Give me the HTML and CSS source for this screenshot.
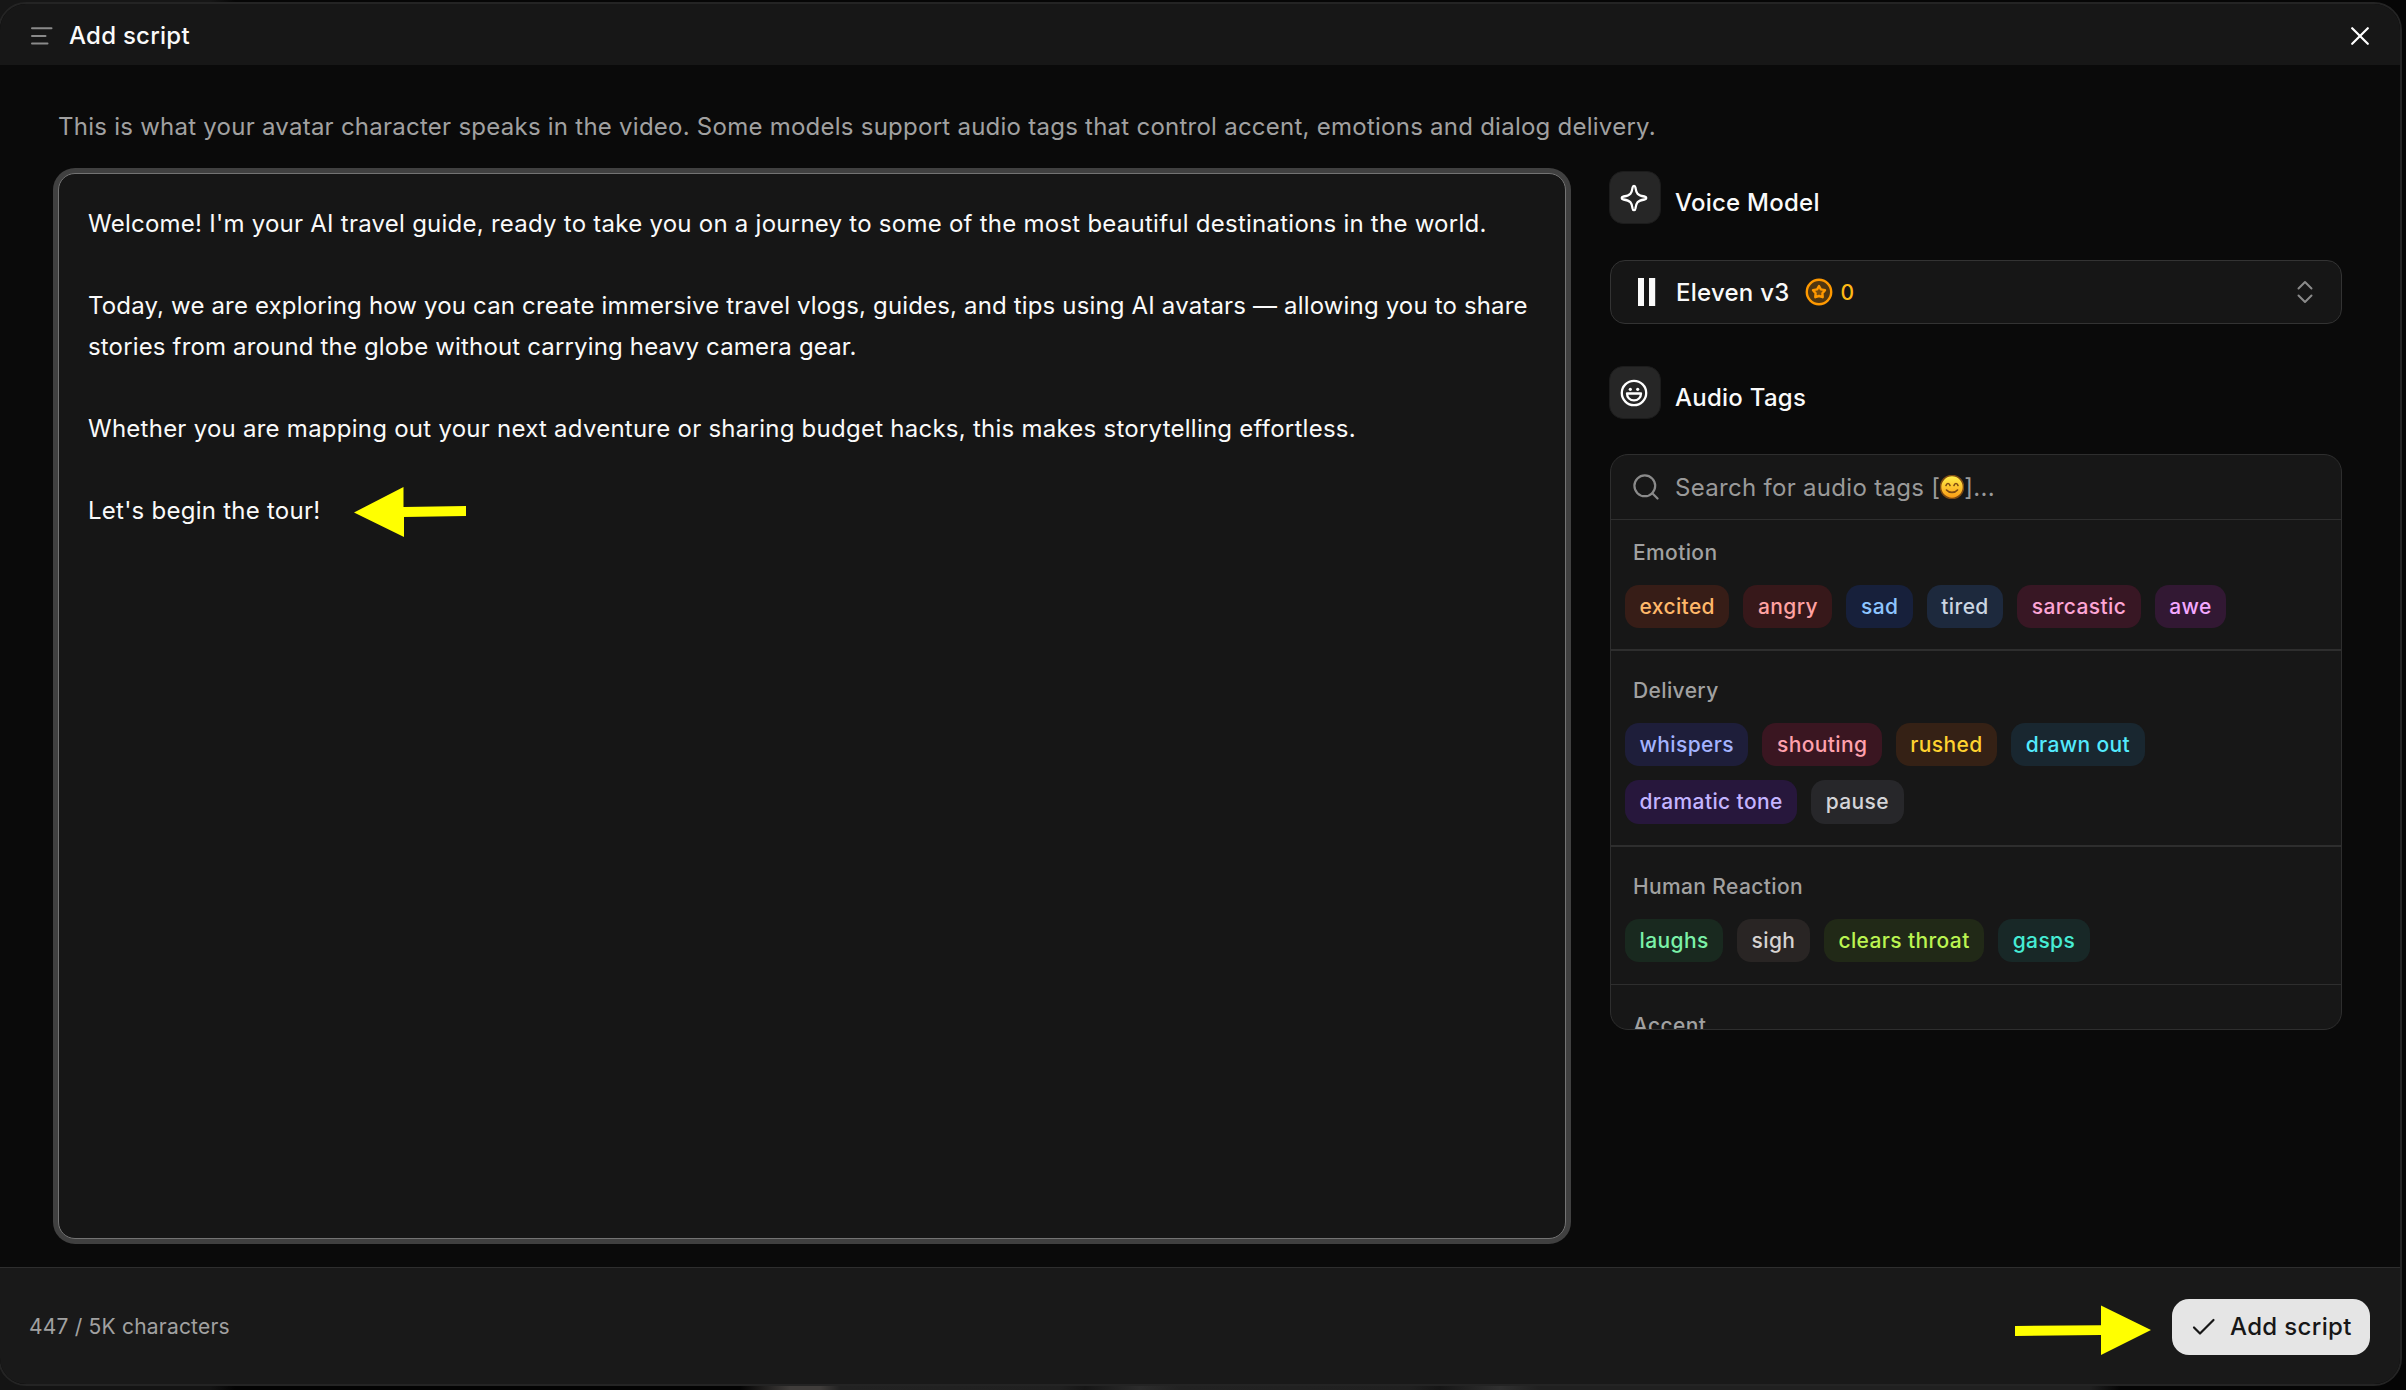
FILE: index.html
```html
<!DOCTYPE html>
<html lang="en">
<head>
<meta charset="utf-8">
<title>Add script</title>
<link rel="stylesheet" href="styles.css">
</head>

<body>

<div class="modal">
 <header class="modal-header">
  <svg class="icon-menu" width="22" height="18" viewBox="0 0 22 18"><path d="M1 1.200h19.500M1 8.900h13.500M1 16.600h15.500"/></svg>
  <h1>Add script</h1>
  <svg class="icon-close" width="18" height="18" viewBox="0 0 18 18"><path d="M1.200 1.200l15.600 15.600M16.800 1.200L1.200 16.800"/></svg>
 </header>

 <main class="modal-body">
  <p class="intro">This is what your avatar character speaks in the video. Some models support audio tags that control accent, emotions and dialog delivery.</p>
  <div class="columns">
   <div class="script">
    <p>Welcome! I'm your AI travel guide, ready to take you on a journey to some of the most beautiful destinations in the world.</p>
    <p class="tight">Today, we are exploring how you can create immersive travel vlogs, guides, and tips using AI avatars — allowing you to share<br>stories from around the globe without carrying heavy camera gear.</p>
    <p>Whether you are mapping out your next adventure or sharing budget hacks, this makes storytelling effortless.</p>
    <p>Let's begin the tour!</p>
   </div>

   <aside class="side">
    <div class="side-title">
     <span class="icon-box"><svg width="28" height="28" viewBox="0 0 28 28"><path d="M14 1.800c.9 0 1.300.9 1.500 2 .8 5.200 1.700 7.500 8.900 8.700 1.100.2 1.900.7 1.900 1.500s-.8 1.300-1.900 1.500c-7.200 1.200-8.100 3.500-8.900 8.700-.2 1.100-.6 2-1.500 2s-1.300-.9-1.500-2c-.8-5.200-1.700-7.500-8.900-8.700-1.100-.2-1.900-.7-1.900-1.500s.8-1.300 1.900-1.500c7.200-1.200 8.100-3.500 8.900-8.700.2-1.100.6-2 1.500-2z"/></svg></span>
     <h2>Voice Model</h2>
    </div>

    <div class="select">
     <svg width="18" height="28" viewBox="0 0 18 28"><path fill="#fafafa" d="M0 0h6v28H0zM11 0h6.200v28H11z"/></svg>
     <span class="select-name">Eleven v3</span>
     <svg class="coin" width="28" height="28" viewBox="0 0 28 28"><circle cx="14" cy="14" r="12.200"/><path d="M14 8l1.900 3.300 4.100.9-2.600 3 .3 4-3.700-1.200-3.700 1.200.3-4-2.600-3 4.100-.9z"/></svg>
     <span class="cost">0</span>
     <svg class="chevrons" width="16" height="24" viewBox="0 0 16 24"><path d="M1.500 8.500L8 2l6.500 6.500M1.500 15.500L8 22l6.500-6.500"/></svg>
    </div>

    <div class="side-title side-title-tags">
     <span class="icon-box"><svg width="28" height="28" viewBox="0 0 28 28"><circle cx="14" cy="14" r="12.200"/><path d="M7 14.500h14c0 4-3 6.900-7 6.900s-7-2.900-7-6.900z"/><circle class="eye" cx="10.300" cy="10.300" r="1.600"/><circle class="eye" cx="17.700" cy="10.300" r="1.600"/></svg></span>
     <h2>Audio Tags</h2>
    </div>

    <div class="tags">
     <div class="search">
      <svg class="icon-search" width="26" height="26" viewBox="0 0 26 26"><circle cx="11.800" cy="11.800" r="10.400"/><path d="M19.300 19.300l5.200 5.200"/></svg>
      <span>Search for audio tags [</span>
      <svg class="emoji" width="24" height="24" viewBox="0 0 24 24">
       <defs><linearGradient id="face" x1="0" y1="0" x2="0" y2="1"><stop offset="0" stop-color="#fff04a"/><stop offset="1" stop-color="#fb9a14"/></linearGradient></defs>
       <circle cx="12" cy="12" r="11.500" fill="url(#face)"/>
       <path d="M6 10.500c.8-2.600 3.200-2.600 4 0M14 10.500c.8-2.600 3.200-2.600 4 0M6.500 15c2.500 3.200 8.500 3.200 11 0"/>
      </svg>
      <span>]...</span>
     </div>
     <section class="group first">
      <h3>Emotion</h3>
      <div class="chips">
       <span class="chip orange">excited</span><span class="chip red">angry</span><span class="chip blue">sad</span><span class="chip slate">tired</span><span class="chip pink">sarcastic</span><span class="chip fuchsia">awe</span>
      </div>
     </section>
     <section class="group">
      <h3>Delivery</h3>
      <div class="chips">
       <span class="chip indigo">whispers</span><span class="chip rose">shouting</span><span class="chip amber">rushed</span><span class="chip cyan">drawn out</span><span class="chip violet">dramatic tone</span><span class="chip zinc">pause</span>
      </div>
     </section>
     <section class="group thin">
      <h3>Human Reaction</h3>
      <div class="chips">
       <span class="chip green">laughs</span><span class="chip stone">sigh</span><span class="chip lime">clears throat</span><span class="chip teal">gasps</span>
      </div>
     </section>
     <section class="group last">
      <h3>Accent</h3>
     </section>
    </div>
   </aside>
  </div>
 </main>

 <footer class="modal-footer">
  <span class="count">447 / 5K characters</span>
  <button class="submit"><svg width="24" height="18" viewBox="0 0 24 18"><path d="M2 9.500l6 6L21.500 2"/></svg>Add script</button>
 </footer>
</div>

<!-- pointer arrows over the dialog -->
<svg class="arrow arrow-script" width="114" height="52" viewBox="0 0 114 52"><path d="M0 26.500L49.500 1v20l62.500-1v10L50 31v20z"/></svg>
<svg class="arrow arrow-submit" width="138" height="52" viewBox="0 0 138 52"><path d="M0 22l86-.8V1.500L136 26 86 51V31L0 32z"/></svg>

</body>
</html>
```
FILE: styles.css
```css
* {
 box-sizing: border-box;
}
body {
 margin: 0;
 padding-top: 2px;
 height: 1390px;
 overflow: hidden;
 /* blurred page that shows in the strips above and below the dialog */
 background:
  linear-gradient(90deg, #141414 210px, #030303 235px, #030303 740px, #403d3b 790px, #403d3b 820px, #222 840px, #202020 1060px, #161616 1085px, #2c2c2c 1140px, #222 1180px, #202020 1410px, #161616 1440px, #303030 1500px, #202020 1540px, #202020 2090px, #050505 2120px) 0 100% / 100% 26px no-repeat,
  linear-gradient(90deg, #161616 210px, #060606 235px);
 color: #fafafa;
 font-family: Inter, "Liberation Sans", sans-serif;
 font-size: 24px;
 letter-spacing: .25px;
}
h1, h2, h3, p {
 margin: 0;
 font-weight: 500;
}
svg {
 display: block;
 flex: none;
 fill: none;
 stroke-linecap: round;
 stroke-linejoin: round;
}
.modal {
 display: flex;
 flex-direction: column;
 width: 2404px;
 height: 1384px;
 margin-left: -2px;
 border: 2px solid #242424;
 border-radius: 28px;
 overflow: hidden;
 background: #0a0a0a;
}
.modal-header {
 display: flex;
 align-items: center;
 height: 61px;
 padding: 2px 31px 0 31px;
 background: #171717;
}
.modal-header h1 {
 margin-left: 16px;
 font-size: 24px;
}
.icon-menu {
 stroke: #8a8a8a;
 stroke-width: 2;
}
.icon-close {
 margin-left: auto;
 stroke: #fff;
 stroke-width: 2.2;
}
.modal-body {
 flex: 1;
 padding: 42px 58px 0;
}
.intro {
 height: 66px;
 line-height: 40px;
 font-weight: 400;
 color: #a1a1a1;
}
.columns {
 display: flex;
 gap: 44px;
}
.script {
 width: 1508px;
 height: 1066px;
 padding: 29px;
 border: 1px solid #737373;
 border-radius: 17px;
 box-shadow: 0 0 0 5px #404040;
 background: #161616;
 line-height: 41px;
 white-space: nowrap;
}
.script p {
 margin-bottom: 41px;
 font-weight: 400;
}
.script .tight {
 letter-spacing: .16px;
}
.side {
 width: 732px;
 margin-top: -2px;
}
.side-title {
 display: flex;
 gap: 14px;
 height: 89px;
}
.side-title h2 {
 padding-top: 16px;
 font-size: 24px;
 line-height: 32px;
}
.icon-box {
 display: flex;
 align-items: center;
 justify-content: center;
 width: 52px;
 height: 53px;
 margin-left: -1px;
 padding-right: 2px;
 border: 1px solid #1c1c1c;
 border-radius: 14px;
 background: #262626;
 stroke: #fff;
 stroke-width: 2.3;
}
.eye {
 fill: #fff;
 stroke: none;
}
.select {
 display: flex;
 align-items: center;
 height: 64px;
 padding: 0 28px 0 27px;
 border: 1px solid #333;
 border-radius: 15px;
 background: #161616;
 font-weight: 500;
}
.select-name {
 margin-left: 20px;
}
.coin {
 margin: 0 8px 0 15px;
 fill: #ff9900;
 fill-opacity: .25;
 stroke: #ff9900;
 stroke-width: 2.4;
}
.cost {
 color: #ffb915;
 font-size: 21px;
}
.chevrons {
 margin-left: auto;
 stroke: #8a8a8a;
 stroke-width: 2;
}
.side-title-tags {
 height: 88px;
 margin-top: 42px;
}
.tags {
 height: 576px;
 border: 1px solid #2e2e2e;
 border-radius: 18px;
 background: #171717;
 overflow: hidden;
}
.search {
 display: flex;
 align-items: center;
 height: 65px;
 padding-left: 22px;
 border-bottom: 1px solid #2e2e2e;
 color: #9a9a9a;
 letter-spacing: .3px;
}
.icon-search {
 margin-right: 16px;
 stroke: #8a8a8a;
 stroke-width: 2.2;
}
.emoji {
 stroke: #7d4a12;
 stroke-width: 1.6;
}
.group {
 padding: 27px 14px 21.5px;
 border-bottom: 2px solid #2e2e2e;
}
.first {
 padding-top: 20px;
 padding-bottom: 21px;
}
.thin {
 padding-bottom: 22px;
 border-bottom-width: 1px;
}
.last {
 padding-top: 28px;
}
.group h3 {
 margin: 0 0 18.5px 8px;
 font-size: 21px;
 line-height: 26px;
 letter-spacing: .38px;
 color: #a1a1a1;
}
.chips {
 display: flex;
 flex-wrap: wrap;
 gap: 14px;
 width: 620px;
}
.chip {
 height: 43.5px;
 padding: 0 14.5px;
 border-radius: 14px;
 font-size: 21px;
 font-weight: 500;
 line-height: 43.5px;
 letter-spacing: .38px;
}
.orange { color: #ffb86a; background: #371d17; }
.red { color: #ffa2a2; background: #37181a; }
.blue { color: #8ec5ff; background: #17203b; }
.slate { color: #cad5e2; background: #1d293d; }
.pink { color: #fda5d5; background: #381724; }
.fuchsia { color: #f4a8ff; background: #321833; }
.indigo { color: #a3b3ff; background: #1e1e3a; }
.rose { color: #ffa1ad; background: #3a1621; }
.amber { color: #ffd230; background: #352115; }
.cyan { color: #53eafd; background: #192730; }
.violet { color: #c4b4ff; background: #27173c; }
.zinc { color: #d4d4d8; background: #27272a; }
.green { color: #7bf1a8; background: #19291f; }
.stone { color: #d6d3d1; background: #292524; }
.lime { color: #bbf451; background: #212917; }
.teal { color: #46ecd5; background: #182827; }
.modal-footer {
 display: flex;
 align-items: center;
 justify-content: space-between;
 height: 117px;
 padding: 1px 30px 0 29px;
 border-top: 1px solid #2e2e2e;
 background: #191919;
}
.count {
 font-size: 21px;
 letter-spacing: .2px;
 color: #a1a1a1;
}
.submit {
 display: flex;
 align-items: center;
 gap: 14px;
 width: 198px;
 height: 56px;
 padding: 0 0 0 20px;
 border: 0;
 border-radius: 17px;
 background: #e5e5e5;
 color: #171717;
 font: 500 24px Inter, "Liberation Sans", sans-serif;
 letter-spacing: .35px;
}
.submit svg {
 stroke: #171717;
 stroke-width: 2.2;
}
.arrow {
 position: absolute;
 fill: #ff0;
}
.arrow-script {
 left: 354px;
 top: 486px;
}
.arrow-submit {
 left: 2015px;
 top: 1304px;
}
```
